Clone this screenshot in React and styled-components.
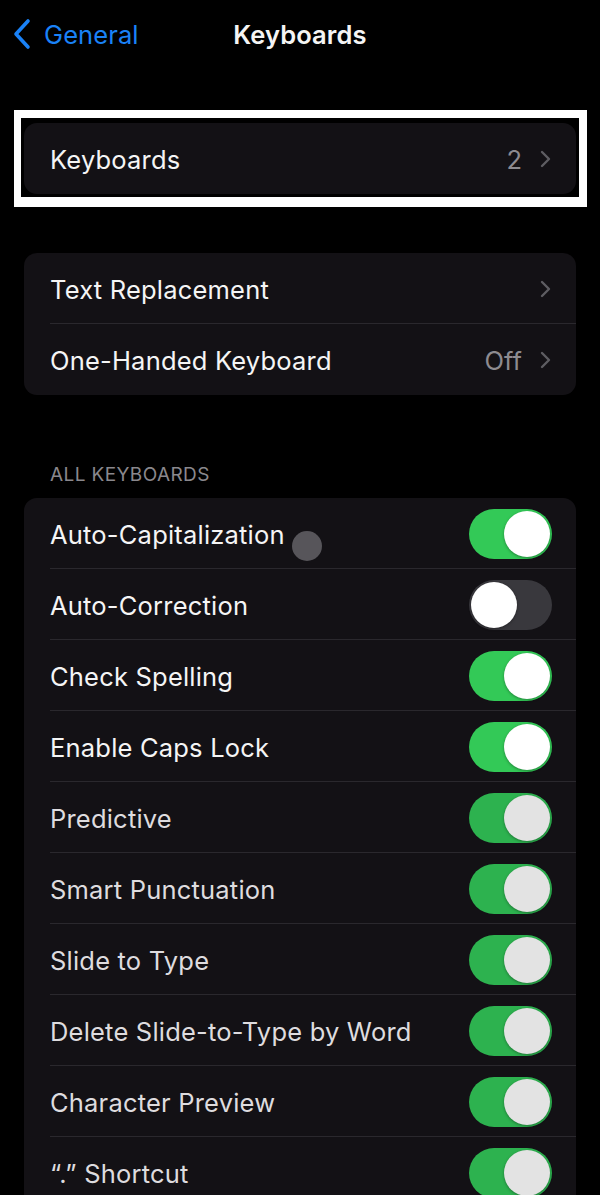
import React, { useState } from 'react';
import styled, { createGlobalStyle } from 'styled-components';

const GlobalStyle = createGlobalStyle`
  html, body {
    margin: 0;
    padding: 0;
    background: #000;
    overflow: hidden;
  }
  body {
    font-family: Inter, "Noto Sans", "Liberation Sans", sans-serif;
    -webkit-font-smoothing: antialiased;
  }
`;

const Screen = styled.div`
  width: 600px;
  min-height: 1195px;
  background: #000;
  display: flex;
  flex-direction: column;
`;

const NavBar = styled.div`
  height: 68px;
  display: grid;
  grid-template-columns: 1fr auto 1fr;
  align-items: center;
`;

const BackButton = styled.div`
  display: flex;
  align-items: center;
  gap: 12px;
  padding-left: 12px;
  color: #1a82f7;
  font-size: 25.5px;
  letter-spacing: 0.1px;
`;

const Title = styled.div`
  color: #f4f4f4;
  font-size: 25.5px;
  font-weight: 600;
  letter-spacing: 0.1px;
`;

const Highlight = styled.div`
  margin: 42px 13px 0 14px;
  border: 8px solid #fff;
  border-left-width: 7px;
  border-bottom-width: 10px;
  padding: 5px 3px 3px 3px;
  background: #000;
`;

const Card = styled.div`
  margin: ${p => p.$margin || '0 24px'};
  background: #131115;
  border-radius: 13px;
  overflow: hidden;
`;

const Row = styled.div`
  position: relative;
  height: 71px;
  display: flex;
  align-items: center;
  padding: 0 25px 0 26px;
  &:not(:last-child)::after {
    content: '';
    position: absolute;
    left: 26px;
    right: 0;
    bottom: 0;
    height: 1px;
    background: #2a282d;
  }
`;

const Label = styled.div`
  flex: 1;
  color: ${p => (p.$dim ? '#dedcdf' : '#f5f5f5')};
  font-size: 25.5px;
  letter-spacing: 0.2px;
  padding-top: 2px;
`;

const Detail = styled.div`
  color: #8d8b90;
  font-size: 25.5px;
  margin-right: 18px;
  padding-top: 2px;
`;

const SectionHeader = styled.div`
  margin: 68px 0 12px 50px;
  color: #8a888d;
  font-size: 19px;
  letter-spacing: 0.4px;
`;

const Track = styled.button`
  position: relative;
  width: 83px;
  height: 50px;
  border: none;
  padding: 0;
  border-radius: 25px;
  margin-right: -1px;
  background: ${p => (p.$on ? (p.$dim ? '#2db24f' : '#33c957') : '#39383d')};
  cursor: pointer;
`;

const Knob = styled.span`
  position: absolute;
  top: 2px;
  left: ${p => (p.$on ? '35px' : '2px')};
  width: 46px;
  height: 46px;
  border-radius: 50%;
  background: ${p => (p.$dim ? '#e3e3e3' : '#fff')};
  box-shadow: 0 1px 3px rgba(0, 0, 0, 0.35);
`;

const TouchDot = styled.span`
  position: absolute;
  left: 268px;
  top: 33px;
  width: 30px;
  height: 30px;
  border-radius: 50%;
  background: #57555a;
`;

const Chevron = ({ color = '#5e5d62' }) => (
  <svg width="11" height="18" viewBox="0 0 11 18">
    <path d="M2 2 L9 9 L2 16" fill="none" stroke={color} strokeWidth="2.4" strokeLinecap="round" strokeLinejoin="round" />
  </svg>
);

const BackChevron = () => (
  <svg width="20" height="32" viewBox="0 0 20 32">
    <path d="M16 3 L4 16 L16 29" fill="none" stroke="#1a82f7" strokeWidth="3.6" strokeLinecap="round" strokeLinejoin="round" />
  </svg>
);

const Toggle = ({ on, dim, onClick }) => (
  <Track $on={on} $dim={dim} onClick={onClick}>
    <Knob $on={on} $dim={dim && on} />
  </Track>
);

const initialToggles = [
  { label: 'Auto-Capitalization', on: true, touch: true },
  { label: 'Auto-Correction', on: false },
  { label: 'Check Spelling', on: true },
  { label: 'Enable Caps Lock', on: true },
  { label: 'Predictive', on: true, dim: true },
  { label: 'Smart Punctuation', on: true, dim: true },
  { label: 'Slide to Type', on: true, dim: true },
  { label: 'Delete Slide-to-Type by Word', on: true, dim: true },
  { label: 'Character Preview', on: true, dim: true },
  { label: '\u201C.\u201D Shortcut', on: true, dim: true },
];

export default function App() {
  const [toggles, setToggles] = useState(initialToggles);

  const flip = (i) =>
    setToggles(toggles.map((t, n) => (n === i ? { ...t, on: !t.on } : t)));

  return (
    <Screen>
      <GlobalStyle />
      <NavBar>
        <BackButton>
          <BackChevron />
          General
        </BackButton>
        <Title>Keyboards</Title>
        <div />
      </NavBar>

      <Highlight>
        <Card $margin="0">
          <Row>
            <Label>Keyboards</Label>
            <Detail>2</Detail>
            <Chevron />
          </Row>
        </Card>
      </Highlight>

      <Card $margin="46px 24px 0">
        <Row>
          <Label>Text Replacement</Label>
          <Chevron />
        </Row>
        <Row>
          <Label>One-Handed Keyboard</Label>
          <Detail>Off</Detail>
          <Chevron />
        </Row>
      </Card>

      <SectionHeader>ALL KEYBOARDS</SectionHeader>
      <Card>
        {toggles.map((t, i) => (
          <Row key={t.label}>
            <Label $dim={t.dim}>{t.label}</Label>
            {t.touch && <TouchDot />}
            <Toggle on={t.on} dim={t.dim} onClick={() => flip(i)} />
          </Row>
        ))}
      </Card>
    </Screen>
  );
}
